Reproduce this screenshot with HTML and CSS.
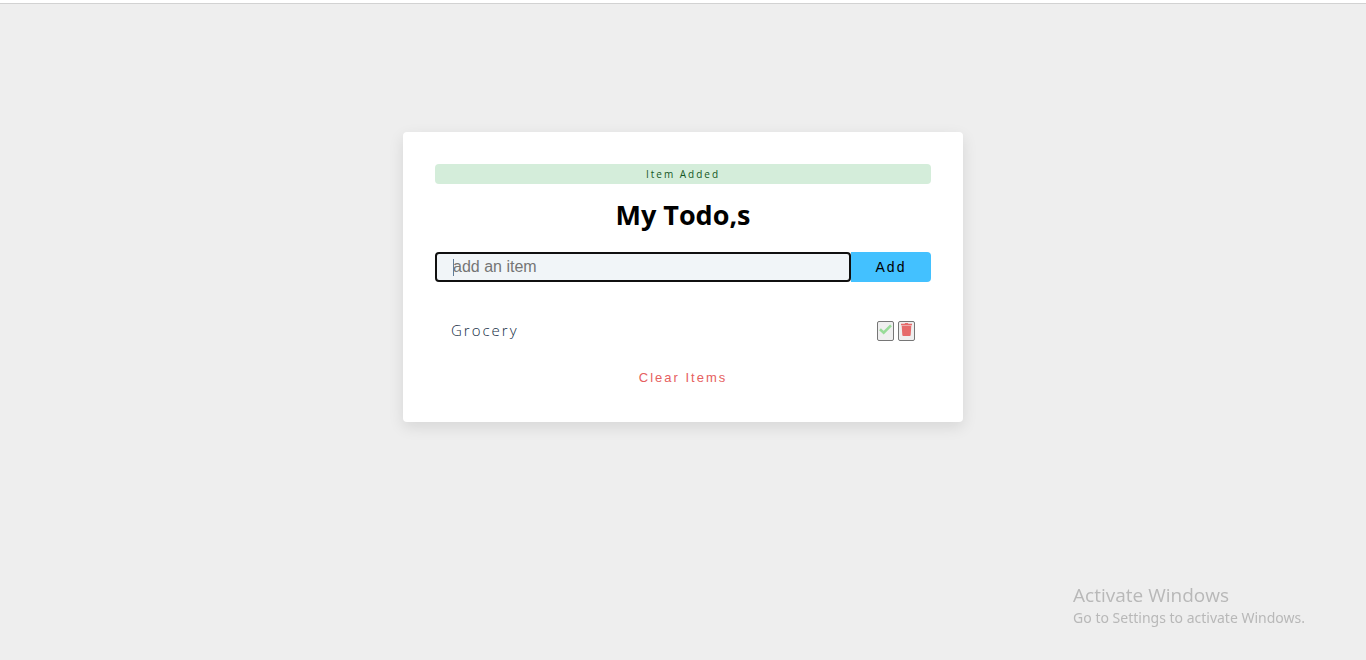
FILE: index.html
```html
<!DOCTYPE html>
<html lang="en">
<head>
<meta charset="utf-8">
<meta name="viewport" content="width=device-width, initial-scale=1">
<title>My Todo,s</title>
<link rel="stylesheet" href="styles.css">
</head>
<body>
<main class="card">
  <form class="todo-form">
    <p class="alert" role="status">Item Added</p>
    <h1 class="title">My Todo,s</h1>
    <div class="form-control">
      <input class="todo-input" type="text" placeholder="add an item" aria-label="Todo item" autofocus>
      <span class="caret" aria-hidden="true"></span>
      <button class="submit-btn" type="submit">Add</button>
    </div>
  </form>
  <section class="todo-list">
    <article class="todo-item">
      <p class="todo-name">Grocery</p>
      <div class="actions">
        <button class="icon-btn" type="button" aria-label="Complete">
          <svg class="icon done" viewBox="0 0 13 14"><path d="M1 6.200 4.700 9.700 12 2.300" fill="none" stroke="currentColor" stroke-width="2.600"/></svg>
        </button>
        <button class="icon-btn" type="button" aria-label="Delete">
          <svg class="icon delete" viewBox="0 0 13 14"><path d="M1 .8h3.600L5.200 0h2.600l.6.800H12v1.500H1zM1.700 2.800h9.600l-.6 9.200q-.1 1-1 1H3.300q-.9 0-1-1z" fill="currentColor"/></svg>
        </button>
      </div>
    </article>
  </section>
  <button class="clear-btn" type="button">Clear Items</button>
</main>
<aside class="watermark">
  <p class="watermark-title">Activate Windows</p>
  <p class="watermark-text">Go to Settings to activate Windows.</p>
</aside>
</body>
</html>
```
FILE: styles.css
```css
* {
  box-sizing: border-box;
  margin: 0;
  padding: 0;
}

body {
  min-height: 100vh;
  padding: 128px 16px 32px;
  border-top: 3px solid #fff;
  background: #eee;
  box-shadow: inset 0 1px #d2d2d2;
  font-family: "Segoe UI", "Open Sans", "Noto Sans", sans-serif;
}

.card {
  display: flex;
  flex-direction: column;
  width: 100%;
  max-width: 560px;
  margin: 1px auto 0;
  padding: 32px;
  border-radius: 4px;
  background: #fff;
  box-shadow: 0 5px 15px rgba(0, 0, 0, 0.1);
}

.alert {
  border-radius: 4px;
  background: #d4edda;
  color: #155724;
  font-size: 10px;
  line-height: 20px;
  letter-spacing: 2px;
  text-align: center;
}

.title {
  margin: 11px 0 17px;
  font-size: 27px;
  line-height: 40px;
  text-align: center;
}

.form-control {
  position: relative;
  display: flex;
}

.todo-input {
  flex: 1;
  min-width: 0;
  height: 30px;
  padding: 0 16px;
  border: 2px solid #101010;
  border-radius: 4px;
  outline: none;
  background: #f1f5f8;
  color: #617d98;
  caret-color: transparent;
  font: 16px "Liberation Sans", Arial, sans-serif;
}

.todo-input::placeholder {
  color: #757575;
}

.caret {
  position: absolute;
  top: 7px;
  left: 18px;
  width: 1px;
  height: 17px;
  background: #617d98;
}

.submit-btn {
  flex: 0 0 80px;
  border: 0;
  border-radius: 0 4px 4px 0;
  background: #43c1ff;
  color: #000;
  font: 14px "Liberation Sans", Arial, sans-serif;
  letter-spacing: 2px;
}

.todo-list {
  margin-top: 32px;
}

.todo-item {
  display: flex;
  align-items: center;
  justify-content: space-between;
  height: 34px;
  padding: 0 16px;
}

.todo-name {
  padding-bottom: 2px;
  color: #102a42;
  font-size: 15px;
  font-weight: 300;
  letter-spacing: 2px;
}

.actions {
  display: flex;
  gap: 4px;
}

.icon-btn {
  width: 17px;
  height: 20px;
  border: 1px solid #767676;
  border-radius: 2px;
  background: #efefef;
}

.icon {
  display: block;
  width: 13px;
  height: 14px;
  margin: 0 auto 2px;
}

.done {
  color: #98dc98;
}

.delete {
  color: #e66b6b;
}

.clear-btn {
  align-self: center;
  margin: 20px 0 2px;
  border: 0;
  background: transparent;
  color: #e66060;
  font: 13px/20px "Liberation Sans", Arial, sans-serif;
  letter-spacing: 2px;
}

.watermark {
  position: fixed;
  right: 61px;
  bottom: 32px;
  color: #b8b8b8;
}

.watermark-title {
  font-size: 19px;
  line-height: 25px;
}

.watermark-text {
  font-family: "Segoe UI", "Noto Sans", sans-serif;
  font-size: 14px;
  line-height: 20px;
}
```
